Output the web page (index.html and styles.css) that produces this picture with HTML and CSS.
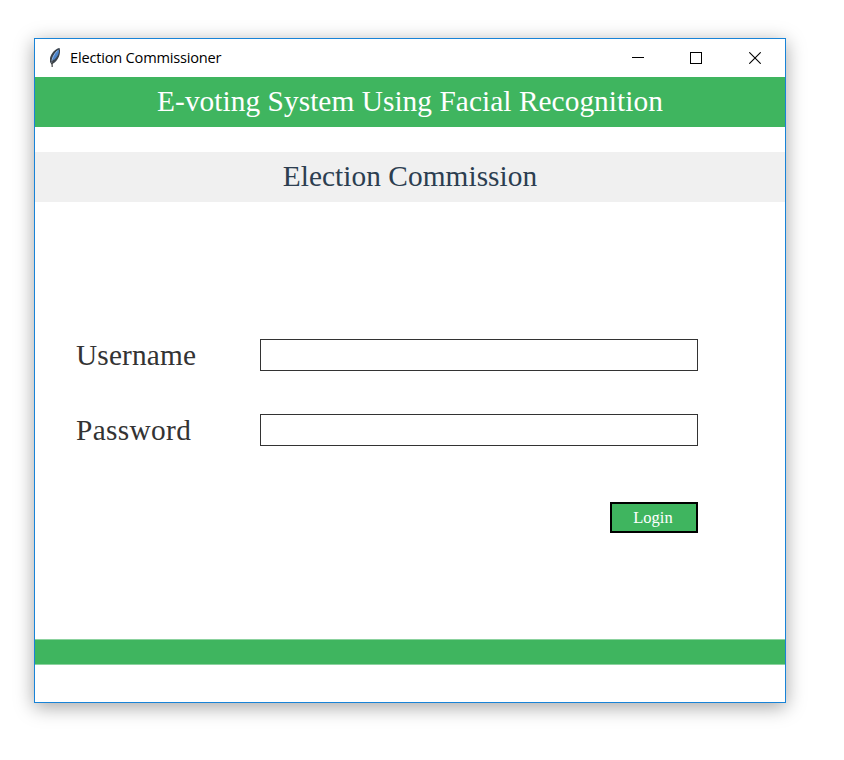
FILE: index.html
```html
<!DOCTYPE html>
<html lang="en">
<head>
<meta charset="utf-8">
<title>Election Commissioner</title>
<link rel="stylesheet" href="styles.css">
</head>
<body>
<main class="window">
  <header class="titlebar">
    <svg class="feather" width="14" height="22" viewBox="0 0 14 22">
      <path d="M11.6 1 C8 1.4 3 6 2 11 L2 15 L3.5 17.5 L6 16 C10 13 13.2 7 11.6 1Z" fill="#3a424b"/>
      <path d="M11 2.5 C8 4 5 8 4 12.5 L6 13 C9.5 10 11.4 6 11 2.5Z" fill="#4a83ca"/>
      <path d="M9.5 3.5 C6 7 4 11 3.6 16" fill="none" stroke="#a9c7e8" stroke-width=".8"/>
      <path d="M4 14 L4.2 20" fill="none" stroke="#444" stroke-width="1.2"/>
    </svg>
    <span class="caption">Election Commissioner</span>
    <svg class="control minimize" width="12" height="12" viewBox="0 0 12 12"><path d="M0 5.5H12" stroke="#000"/></svg>
    <svg class="control" width="12" height="12" viewBox="0 0 12 12"><rect x=".5" y=".5" width="11" height="11" fill="none" stroke="#000"/></svg>
    <svg class="control" width="12" height="12" viewBox="0 0 12 12"><path d="M.3 .3L11.7 11.7M11.7 .3L.3 11.7" stroke="#000" stroke-width="1.1"/></svg>
  </header>
  <h1 class="band banner">E-voting System Using Facial Recognition</h1>
  <h2 class="band section">Election Commission</h2>
  <form class="login">
    <label class="label user" for="username">Username</label>
    <input class="field" id="username" type="text">
    <label class="label pass" for="password">Password</label>
    <input class="field" id="password" type="password">
    <button class="submit" type="button">Login</button>
  </form>
  <footer class="footer"></footer>
</main>
</body>
</html>
```
FILE: styles.css
```css
* { box-sizing: border-box; }
body {
  min-height: 100vh;
  margin: 0;
  padding: 38px 0 0 34px;
  background: #fff;
}
.window {
  display: flex;
  flex-direction: column;
  width: 752px;
  height: 665px;
  border: 1px solid #1883d7;
  background: #fff;
  box-shadow: 0 4px 18px rgba(0, 0, 0, .36);
  font-family: "Liberation Serif", "Times New Roman", serif;
}
.titlebar {
  display: flex;
  align-items: center;
  height: 38px;
  flex: none;
  padding: 0 24px 0 13px;
}
.feather { margin-right: 8px; }
.caption {
  flex: 1;
  font: 14.6px/20px "Open Sans", "Segoe UI", sans-serif;
  letter-spacing: -.2px;
  padding-bottom: 2px;
  color: #000;
}
.control { margin-left: 47px; }
.minimize { position: relative; left: 1px; }
.band {
  height: 50px;
  margin: 0;
  flex: none;
  text-align: center;
  font-weight: 400;
  font-size: 29.33px;
  letter-spacing: .06px;
  line-height: 48px;
}
.banner { background: #3fb55f; color: #fff; }
.section { margin-top: 25px; background: #f0f0f0; color: #2c3e50; }
.login {
  display: grid;
  grid-template-columns: 184px 438px;
  grid-template-rows: 32px 32px 45px;
  row-gap: 43px;
  margin: 137px 0 0 41px;
}
.label {
  justify-self: start;
  font-size: 29.33px;
  line-height: 32px;
  color: #333;
}
.user { letter-spacing: .15px; }
.pass { letter-spacing: .35px; }
.field {
  width: 438px;
  height: 32px;
  border: 1px solid #333;
  background: #fff;
  font: 18px "Liberation Serif", serif;
  padding: 0 5px;
  outline: 0;
}
.submit {
  grid-column: 2;
  justify-self: end;
  width: 88px;
  height: 31px;
  margin-top: 13px;
  padding: 0 2px 0 0;
  border: 2px solid #000;
  background: #3fb55f;
  color: #fff;
  font: 16.5px "Liberation Serif", serif;
}
.footer {
  height: 26px;
  margin-top: 105px;
  border: solid #8cd29f;
  border-width: 1px 0;
  background: #3fb55f;
}
```
